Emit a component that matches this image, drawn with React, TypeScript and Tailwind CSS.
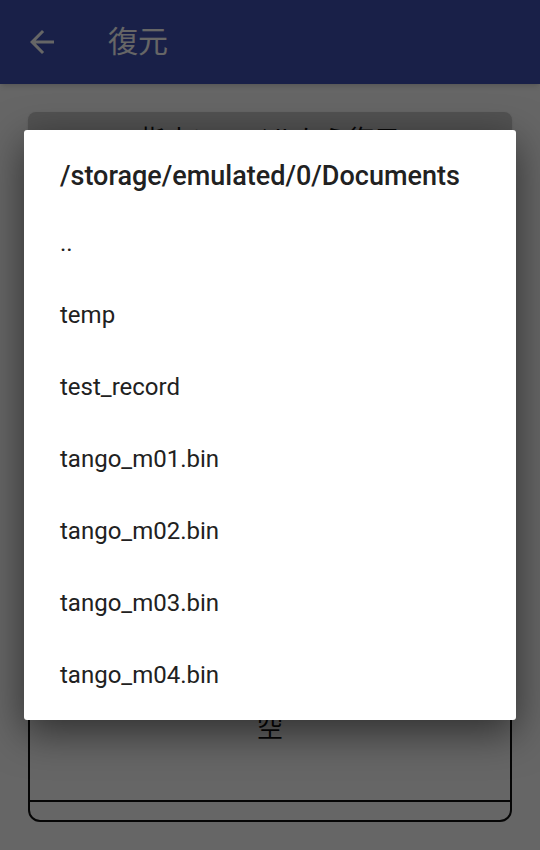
const files = ['..', 'temp', 'test_record', 'tango_m01.bin', 'tango_m02.bin', 'tango_m03.bin', 'tango_m04.bin'];

function ArrowBack() {
  return (
    <svg width="36" height="36" viewBox="0 0 24 24" fill="#ffffff">
      <path d="M20 11H7.83l5.59-5.59L12 4l-8 8 8 8 1.41-1.41L7.83 13H20v-2z" />
    </svg>
  );
}

export default function App() {
  return (
    <div
      className="relative w-[540px] h-[850px] overflow-hidden bg-white"
      style={{ fontFamily: 'Roboto, "Noto Sans CJK JP", sans-serif' }}
    >
      {/* page under the dialog */}
      <div className="flex flex-col h-full">
        <header className="h-[84px] bg-[#3f51b5] flex items-center shrink-0 shadow-md">
          <div className="ml-[24px] w-[36px] h-[36px] flex items-center justify-center">
            <ArrowBack />
          </div>
          <h1 className="ml-[48px] text-[30px] leading-none text-white">復元</h1>
        </header>

        <div className="flex-1 flex flex-col px-[28px] pt-[28px] pb-[28px] gap-[20px]">
          <button className="h-[56px] rounded-[8px] bg-[#cdcdcd] text-[26px] text-[#111] flex items-center justify-center shadow-sm">
            指定ファイルから復元
          </button>
          <div className="flex-1 flex flex-col border-[2px] border-[#111] rounded-b-[12px]">
            <div className="flex-1 flex items-end justify-center pb-[52px]">
              <span className="text-[26px] text-[#111]">空</span>
            </div>
            <div className="h-[20px] border-t-[2px] border-[#111]" />
          </div>
        </div>
      </div>

      {/* scrim */}
      <div className="absolute inset-0 bg-black/60" />

      {/* dialog */}
      <div className="absolute left-[24px] top-[130px] w-[492px] h-[590px] bg-white rounded-[3px] shadow-[0_12px_40px_rgba(0,0,0,0.55)] flex flex-col">
        <div className="pl-[36px] pt-[28px] pb-[13px] text-[27px] leading-[36px] font-medium text-[#212121]">
          /storage/emulated/0/Documents
        </div>
        <ul className="flex flex-col">
          {files.map((f) => (
            <li key={f} className="h-[72px] flex items-center pl-[36px] text-[24px] text-[#212121]">
              {f}
            </li>
          ))}
        </ul>
      </div>
    </div>
  );
}
